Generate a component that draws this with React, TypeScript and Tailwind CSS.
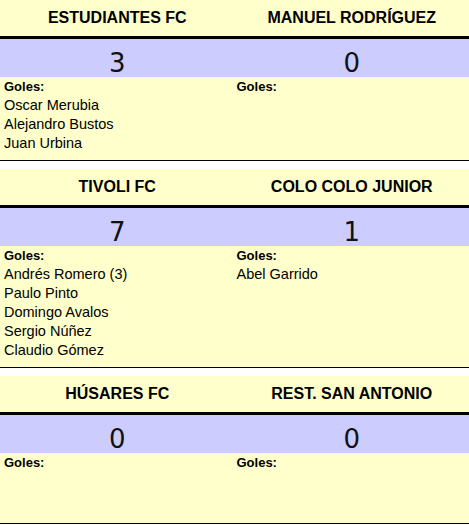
const matches = [
  {
    home: "ESTUDIANTES FC",
    away: "MANUEL RODRÍGUEZ",
    homeScore: 3,
    awayScore: 0,
    homeGoals: ["Oscar Merubia", "Alejandro Bustos", "Juan Urbina"],
    awayGoals: [] as string[],
  },
  {
    home: "TIVOLI FC",
    away: "COLO COLO JUNIOR",
    homeScore: 7,
    awayScore: 1,
    homeGoals: [
      "Andrés Romero (3)",
      "Paulo Pinto",
      "Domingo Avalos",
      "Sergio Núñez",
      "Claudio Gómez",
    ],
    awayGoals: ["Abel Garrido"],
  },
  {
    home: "HÚSARES FC",
    away: "REST. SAN ANTONIO",
    homeScore: 0,
    awayScore: 0,
    homeGoals: [] as string[],
    awayGoals: [] as string[],
  },
];

const Scorers = ({ names, right }: { names: string[]; right?: boolean }) => {
  return (
    <div className={right ? "pl-[2px] pb-[7px]" : "pl-[4px] pb-[7px]"}>
      <div className="h-[19px] leading-[19px] text-[13px] font-bold text-black">
        Goles:
      </div>
      {names.map((n) => (
        <div key={n} className="h-[19px] leading-[19px] text-[14.5px] text-black">
          {n}
        </div>
      ))}
    </div>
  );
};

const MatchCard = ({ m }: { m: (typeof matches)[number] }) => {
  return (
    <div className="w-full bg-[#ffffcc] border-b border-black">
      {/* Team names */}
      <div className="grid grid-cols-2 h-[36px] border-b-[3px] border-black box-content">
        <div className="flex items-center justify-center text-[16px] font-bold text-black">
          {m.home}
        </div>
        <div className="flex items-center justify-center text-[16px] font-bold text-black">
          {m.away}
        </div>
      </div>

      {/* Score */}
      <div className="grid grid-cols-2 h-[38px] bg-[#ccccff]">
        <div className="flex items-end justify-center pb-[1px]">
          <span className="text-[26px] leading-[26px] text-[#111] font-['DejaVu_Sans',sans-serif]">
            {m.homeScore}
          </span>
        </div>
        <div className="flex items-end justify-center pb-[1px]">
          <span className="text-[26px] leading-[26px] text-[#111] font-['DejaVu_Sans',sans-serif]">
            {m.awayScore}
          </span>
        </div>
      </div>

      {/* Goals */}
      <div className="grid grid-cols-2 min-h-[70px]">
        <Scorers names={m.homeGoals} />
        <Scorers names={m.awayGoals} right />
      </div>
    </div>
  );
};

export default function App() {
  return (
    <div className="w-[469px] min-h-[525px] bg-white font-['Liberation_Sans',Arial,sans-serif]">
      <div className="flex flex-col gap-2">
        {matches.map((m) => (
          <MatchCard key={m.home} m={m} />
        ))}
      </div>
    </div>
  );
}
